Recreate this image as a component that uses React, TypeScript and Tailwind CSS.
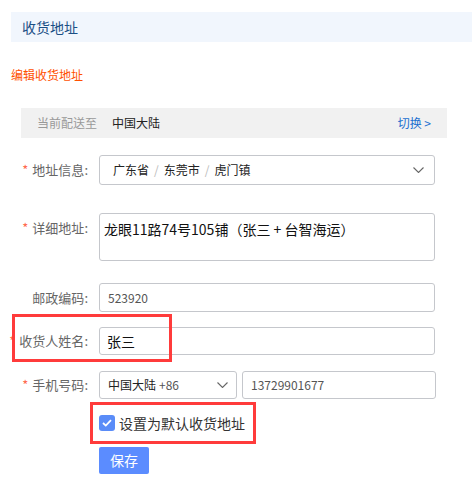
import React from "react";

const FONT = "font-['Microsoft_YaHei','Noto_Sans_CJK_SC',sans-serif]";

function Label({ text, required = true }: { text: string; required?: boolean }) {
  return (
    <div className="w-[88px] shrink-0 text-right text-[13px] leading-[28px] text-[#666]">
      {required && <span className="mr-[4px] text-[#ff6a4d]">*</span>}
      {text}:
    </div>
  );
}

function Chevron() {
  return (
    <svg width="11" height="6" viewBox="0 0 11 6" fill="none">
      <path d="M0.5 0.5L5.5 5.5L10.5 0.5" stroke="#666" strokeWidth="1.1" />
    </svg>
  );
}

export default function App() {
  return (
    <div className={`relative min-h-[481px] w-[472px] bg-white pt-[12px] ${FONT}`}>
      {/* page header */}
      <div className="ml-[11px] flex h-[30px] items-center bg-[#f1f6fd] pl-[11px] text-[14px] text-[#1b4f85]">
        收货地址
      </div>

      <div className="ml-[11px] mt-[25px] text-[12px] leading-[16px] text-[#ff5000]">编辑收货地址</div>

      {/* delivery region bar */}
      <div className="ml-[21px] mt-[25px] flex h-[30px] w-[426px] items-center bg-[#f1f1f1] pl-[16px] pr-[16px] text-[12px]">
        <span className="text-[#999]">当前配送至</span>
        <span className="ml-[15px] text-[#222]">中国大陆</span>
        <span className="ml-auto text-[#1a6fd0]">切换 &gt;</span>
      </div>

      {/* form */}
      <div className="mt-[17px] flex items-center gap-[11px]">
        <Label text="地址信息" />
        <div className="flex h-[30px] w-[336px] items-center rounded-[3px] border border-[#c5c7cc] pl-[13px] pr-[10px] text-[12px] text-[#222]">
          <span>广东省</span>
          <span className="mx-[5px] text-[#bbb]">/</span>
          <span>东莞市</span>
          <span className="mx-[5px] text-[#bbb]">/</span>
          <span>虎门镇</span>
          <span className="ml-auto">
            <Chevron />
          </span>
        </div>
      </div>

      <div className="mt-[28px] flex items-start gap-[11px]">
        <div className="pt-[1px]">
          <Label text="详细地址" />
        </div>
        <div className="h-[48px] w-[336px] rounded-[3px] border border-[#c5c7cc] px-[4px] pt-[5px] text-[14px] leading-[20px] text-[#111]">
          龙眼11路74号105铺（张三 + 台智海运）
        </div>
      </div>

      <div className="mt-[22px] flex items-center gap-[11px]">
        <Label text="邮政编码" required={false} />
        <div className="flex h-[29px] w-[336px] items-center rounded-[3px] border border-[#c5c7cc] pl-[8px] text-[12px] text-[#555]">
          523920
        </div>
      </div>

      <div className="mt-[15px] flex items-center gap-[11px]">
        <Label text="收货人姓名" />
        <div className="flex h-[28px] w-[336px] items-center rounded-[3px] border border-[#c5c7cc] pl-[7px] text-[14px] text-[#111]">
          张三
        </div>
      </div>

      <div className="mt-[16px] flex items-center gap-[11px]">
        <Label text="手机号码" />
        <div className="flex gap-[5px]">
          <div className="flex h-[28px] w-[138px] items-center rounded-[3px] border border-[#c5c7cc] pl-[8px] pr-[8px] text-[12px]">
            <span className="text-[#222]">中国大陆</span>
            <span className="ml-[3px] text-[#555]">+86</span>
            <span className="ml-auto">
              <Chevron />
            </span>
          </div>
          <div className="flex h-[28px] w-[194px] items-center rounded-[3px] border border-[#c5c7cc] pl-[8px] text-[12px] text-[#555]">
            13729901677
          </div>
        </div>
      </div>

      <div className="ml-[99px] mt-[16px] flex items-center gap-[4px]">
        <div className="flex h-[16px] w-[16px] items-center justify-center rounded-[3px] bg-[#5a8cf8]">
          <svg width="10" height="8" viewBox="0 0 10 8" fill="none">
            <path d="M1 4L3.8 6.6L9 1.2" stroke="#fff" strokeWidth="1.8" />
          </svg>
        </div>
        <span className="text-[14px] leading-[16px] text-[#333]">设置为默认收货地址</span>
      </div>

      <button className="ml-[99px] mt-[16px] flex h-[27px] w-[50px] items-center justify-center rounded-[2px] bg-[#5b8cff] text-[14px] text-white">
        保存
      </button>

      {/* annotation boxes */}
      <div className="absolute left-[12px] top-[314px] h-[48px] w-[160px] border-[3px] border-[#ff3b3b]" />
      <div className="absolute left-[90px] top-[402px] h-[42px] w-[166px] border-[3px] border-[#ff3b3b]" />
    </div>
  );
}
